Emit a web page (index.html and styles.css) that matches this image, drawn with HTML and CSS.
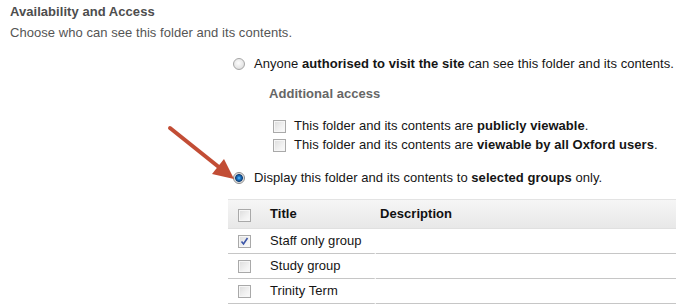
FILE: index.html
```html
<!DOCTYPE html>
<html lang="en">
<head>
  <meta charset="UTF-8" />
  <meta name="viewport" content="width=device-width, initial-scale=1.0"/>
  <title>Availability and Access</title>
  <link rel="stylesheet" href="styles.css">
</head>
<body>
  <h2 class="section-title">Availability and Access</h2>
  <p class="intro">Choose who can see this folder and its contents.</p>

  <div class="access-form">
    <label class="option option-site">
      <span class="radio"></span>
      <span>Anyone <b>authorised to visit the site</b> can see this folder and its contents.</span>
    </label>

    <div class="additional">
      <h3>Additional access</h3>
      <label class="check-row first">
        <span class="box"></span>
        <span>This folder and its contents are <b>publicly viewable</b>.</span>
      </label>
      <label class="check-row">
        <span class="box"></span>
        <span>This folder and its contents are <b>viewable by all Oxford users</b>.</span>
      </label>
    </div>

    <label class="option option-groups">
      <span class="radio checked"></span>
      <span>Display this folder and its contents to <b>selected groups</b> only.</span>
    </label>

    <!-- pointer arrow drawn over the page -->
    <svg class="pointer" width="72" height="60" viewBox="0 0 72 60">
      <line x1="4" y1="4" x2="54" y2="44" stroke="#c24d35" stroke-width="4" stroke-linecap="round"/>
      <polygon points="68,55 46,50 58,35" fill="#c24d35"/>
    </svg>

    <table class="groups">
      <thead>
        <tr>
          <th class="col-check"><span class="box"></span></th>
          <th class="col-title">Title</th>
          <th class="col-desc">Description</th>
        </tr>
      </thead>
      <tbody>
        <tr>
          <td class="col-check"><span class="box checked"><svg width="9" height="9" viewBox="0 0 9 9"><path d="M1.5 4.5 L3.5 7 L7.5 1" fill="none" stroke="#3b55a8" stroke-width="1.6"/></svg></span></td>
          <td class="col-title">Staff only group</td>
          <td class="col-desc"></td>
        </tr>
        <tr>
          <td class="col-check"><span class="box"></span></td>
          <td class="col-title">Study group</td>
          <td class="col-desc"></td>
        </tr>
        <tr>
          <td class="col-check"><span class="box"></span></td>
          <td class="col-title">Trinity Term</td>
          <td class="col-desc"></td>
        </tr>
      </tbody>
    </table>
  </div>
</body>
</html>
```
FILE: styles.css
```css
html, body {
  overflow: hidden;
}
body {
  font-family: "Liberation Sans", Arial, sans-serif;
  font-size: 13px;
  line-height: 16px;
  letter-spacing: 0.05px;
  color: #151515;
  background: #fff;
  margin: 0;
  padding: 4px 0 0 10px;
}
.section-title {
  font-size: 13px;
  font-weight: bold;
  color: #4d4d4d;
  margin: 0;
}
.intro {
  color: #555;
  margin: 5px 0 0;
}
.access-form {
  position: relative;
  padding-top: 15px;
}
.option {
  display: flex;
  align-items: center;
  gap: 9px;
  margin-left: 223px;
  white-space: nowrap;
}
.option-groups {
  margin-top: 17px;
}
.additional {
  margin-left: 259px;
}
.additional h3 {
  font-size: 13px;
  font-weight: bold;
  color: #666;
  margin: 14px 0 0;
}
.check-row {
  display: flex;
  align-items: center;
  gap: 8px;
  margin-top: 3px;
  margin-left: 4px;
  white-space: nowrap;
}
.check-row.first {
  margin-top: 16px;
}
.radio {
  width: 12px;
  height: 12px;
  box-sizing: border-box;
  border-radius: 50%;
  border: 1px solid #a6a6a6;
  background: radial-gradient(circle at 45% 40%, #fdfdfd 0, #e6e6e6 60%, #cfcfcf 100%);
  flex: none;
}
.radio.checked {
  border-color: #8a8a8a;
  background: radial-gradient(circle at 50% 50%, #6cc3ff 0, #1f7fd0 1.5px, #0e3f78 3.5px, #c9c9c9 4.2px, #f4f4f4 5px);
}
.box {
  display: inline-flex;
  align-items: center;
  justify-content: center;
  width: 13px;
  height: 13px;
  box-sizing: border-box;
  border: 1px solid #a9a9a9;
  background: linear-gradient(135deg, #dcdcdc 0, #f1f1f1 60%, #fbfbfb 100%);
  box-shadow: inset 0 0 0 1px #f6f6f6;
  flex: none;
  vertical-align: middle;
}
.pointer {
  position: absolute;
  left: 156px;
  top: 83px;
}
.groups {
  margin: 13px 0 0 218px;
  width: calc(100% - 218px);
  border-collapse: separate;
  border-spacing: 0;
}
.groups th {
  height: 28px;
  text-align: left;
  font-weight: bold;
  color: #111;
  border-top: 1px solid #e3e3e3;
  background: linear-gradient(#f6f6f6, #e8e8e8);
  border-bottom: 1px solid #e0e0e0;
  padding: 0;
}
.groups td {
  height: 24px;
  padding: 0;
  border-bottom: 1px solid #c6c6c6;
}
.col-check {
  width: 34px;
  padding-left: 10px !important;
  box-sizing: border-box;
}
.groups th.col-check .box {
  margin-top: 1px;
}
.col-title {
  width: 104px;
  padding-left: 8px !important;
}
.groups td.col-title {
  border-right: 2px solid #fff;
}
.col-desc {
  padding-left: 4px !important;
}
```
